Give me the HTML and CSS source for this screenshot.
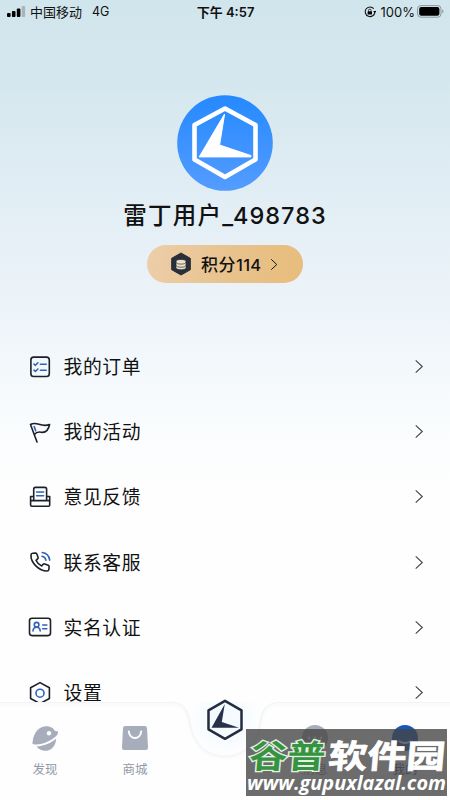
FILE: index.html
```html
<!DOCTYPE html>
<html lang="zh-CN">
<head>
<meta charset="utf-8">
<title>我的</title>
<link rel="stylesheet" href="styles.css">
</head>
<body>
<svg class="defs" width="0" height="0">
  <defs>
    <symbol id="chevron" viewBox="0 0 10 16"><path d="M1.500 1.500 8.500 8l-7 6.500" fill="none" stroke="currentColor" stroke-width="1.200"/></symbol>
    <linearGradient id="blue" x1="0" y1="0" x2="0" y2="1"><stop offset="0" stop-color="#2589ff"/><stop offset="1" stop-color="#549cff"/></linearGradient>
  </defs>
</svg>
<div class="screen">
  <header class="status">
    <div class="status-left">
      <svg width="19" height="11" viewBox="0 0 19 11"><rect x="0" y="7" width="3.6" height="4" rx="1"/><rect x="4.9" y="5" width="3.6" height="6" rx="1"/><rect x="9.8" y="2.5" width="3.6" height="8.5" rx="1"/><rect x="14.7" y="0" width="3.4" height="11" rx="1" fill="#a8b4ba"/></svg>
      <span class="carrier">中国移动</span><span class="net">4G</span>
    </div>
    <div class="time">下午 4:57</div>
    <div class="status-right">
      <svg width="12" height="12" viewBox="0 0 12 12"><path d="M9.7 2.7A4.8 4.8 0 1 0 10.8 6M9.7 9.3A4.8 4.8 0 0 0 10.8 5" fill="none" stroke="#111" stroke-width="1.1"/><path d="m9.2 5 3 0-1.5 2z"/><rect x="3.6" y="5.2" width="4.4" height="3.2" rx=".5"/><path d="M4.5 5.5V4.400a1.300 1.300 0 0 1 2.600 0v1.100" fill="none" stroke="#111" stroke-width=".8"/></svg>
      <span class="percent">100%</span>
      <svg width="27" height="13" viewBox="0 0 27 13"><rect x=".6" y=".6" width="23.400" height="11.600" rx="3.200" fill="none" stroke="#8b979e"/><rect x="2.200" y="2.100" width="20.200" height="8.600" rx="2"/><path d="M25.200 4.600v3.600q1.300-.500 1.300-1.800t-1.300-1.800" fill="#8b979e"/></svg>
    </div>
  </header>

  <section class="profile">
    <svg class="avatar" width="96" height="96" viewBox="0 0 96 96"><circle cx="48" cy="48" r="47.800" fill="url(#blue)"/><path d="M48 13.500 78.500 30v34.500L48 82 17.500 64.500V30Z" fill="none" stroke="#fff" stroke-width="4.600" stroke-linejoin="round"/><path d="M47.600 19 42.600 50 74 60.600v1.300H22.200z" fill="#fff" stroke="#fff" stroke-linejoin="round"/></svg>
    <h1 class="name">雷丁用户<span class="digits">_498783</span></h1>
    <div class="points">
      <svg width="24" height="25" viewBox="0 0 24 25"><path d="m12.800 2 9 5v11l-9 5-9-5V7z" fill="#a88d62" opacity=".6"/><path d="m12 1 9.300 5.300v11.400L12 23l-9.300-5.300V6.300z" fill="#292f38" stroke="#292f38" stroke-linejoin="round"/><g fill="#eee0c8" stroke="#292f38" stroke-width=".7"><path d="M7 13v2.500c0 3 10 3 10 0V13z"/><path d="M7 10.500v2.500c0 3 10 3 10 0v-2.500z"/><ellipse cx="12" cy="9.800" rx="5" ry="2.300"/></g></svg>
      <span class="points-text">积分<span class="points-num">114</span></span>
      <svg class="points-arrow" width="8" height="13"><use href="#chevron"/></svg>
    </div>
  </section>

  <nav class="menu">
    <div class="item"><svg class="icon" viewBox="0 0 24 24"><rect x="2.900" y="2.100" width="18.400" height="19.400" rx="2.800"/><g class="accent"><path d="m6 9 1.400 1.300L9.900 7.800M12.400 9.200h5.800M6 15.200l1.400 1.300 2.500-2.500M12.400 15.300h5.800"/></g></svg><span class="label">我的订单</span><svg class="chevron"><use href="#chevron"/></svg></div>
    <div class="item"><svg class="icon" viewBox="0 0 24 24"><path d="M2.500 4.500 9 22M2.500 4.500C9 .500 12.500 8 21.600 4.500 20.500 10 18 13 13 12.200c-3-.500-5 .200-6.800 2.500"/><path class="accent" d="m6.200 6.500 1.500 4.300"/></svg><span class="label">我的活动</span><svg class="chevron"><use href="#chevron"/></svg></div>
    <div class="item"><svg class="icon" viewBox="0 0 24 24"><path d="M5.700 11.500H2.600V20q0 1.200 1.200 1.200h16.700q1.200 0 1.200-1.200v-8.500h-3.100M2.600 15.600h19.100M5.700 15.300V4.200q0-1.800 1.800-1.800h9.300q1.800 0 1.800 1.800v11.100"/><path class="accent" d="M8.600 7h7M8.600 10.800h7"/></svg><span class="label">意见反馈</span><svg class="chevron"><use href="#chevron"/></svg></div>
    <div class="item"><svg class="icon" viewBox="0 0 24 24"><path d="M4.800 3.200 7.600 3q1 0 1.300 1l1.200 3.400q.300.900-.500 1.500L8 10.300q1.700 4 5.700 5.700l1.500-1.700q.600-.700 1.500-.400l3.500 1.300q.900.400.900 1.300l-.200 3q-.200 1.500-1.800 1.500C11 21 2.500 12.500 3 5q0-1.600 1.800-1.800Z"/><path class="accent" d="M14 6.200q3.200.500 3.900 4M14.200 2.500q6.500.700 7.500 7.600"/></svg><span class="label">联系客服</span><svg class="chevron"><use href="#chevron"/></svg></div>
    <div class="item"><svg class="icon" viewBox="0 0 24 24"><rect x="1.500" y="3.200" width="21" height="17.400" rx="2.500"/><g class="accent"><circle cx="8.600" cy="9.700" r="2.300"/><path d="M5 16q.200-3.800 3.600-3.800T12.200 16M14.700 10h4.100M14.700 13.700h4.100"/></g></svg><span class="label">实名认证</span><svg class="chevron"><use href="#chevron"/></svg></div>
    <div class="item"><svg class="icon" viewBox="0 0 24 24"><path d="m12 1.600 9.400 5.200v10.700L12 22.600l-9.400-5.100V6.800Z"/><circle class="accent" cx="12" cy="12.200" r="4"/></svg><span class="label">设置</span><svg class="chevron"><use href="#chevron"/></svg></div>
  </nav>

  <footer class="tabs">
    <svg class="tabs-bg" width="450" height="98" viewBox="0 0 450 98">
      <defs><radialGradient id="well"><stop offset=".35" stop-color="#f5fafe"/><stop offset="1" stop-color="#fdfeff"/></radialGradient></defs>
      <path d="M0 0h450v98H0z" fill="#fefefe"/>
      <circle cx="225" cy="18" r="37" fill="url(#well)"/>
      <path d="M0 2h170c12 0 17 6 19 16 3 24 16 37 36 37s33-13 36-37c2-10 7-16 19-16h170" fill="none" stroke="#fafbfb" stroke-width="4"/>
      <path d="M0 .500h170c12 0 17 6 19 16 3 24 16 38 36 38s33-14 36-38c2-10 7-16 19-16h170" fill="none" stroke="#f1f3f4"/>
    </svg>
    <div class="tab"><svg width="28" height="28" viewBox="0 0 28 28"><path d="M1.500 18.500C3 6 10 1.200 18 2.600c3 .700 4.500 2 6.200 4.600 2.600-.400 3.500.600 2.300 3.300C23 16 9 22 2.600 20.300q-1.600-.300-1.100-1.800Z"/><path d="M5.500 22.500C14 22 21 18.500 25.200 14.500 24.500 28 11.500 30 5.500 22.500Z"/><circle cx="18" cy="9.200" r="2.200" fill="#fff"/></svg><span>发现</span></div>
    <div class="tab"><svg width="28" height="28" viewBox="0 0 28 28"><path d="M4.200 2h19.600q2 0 2.200 2l1 19.500q.100 2.500-2.300 2.500H3.300Q.900 26 1 23.500L2 4q.200-2 2.200-2Z"/><path d="M7.800 7.500c1 8.500 11.400 8.500 12.400 0" fill="none" stroke="#fff" stroke-width="2" stroke-linecap="round"/></svg><span>商城</span></div>
    <div class="tab home"><svg width="38" height="44" viewBox="0 0 38 44"><path d="M19 2.800 35.500 12.300v19L19 40.800 2.500 31.300v-19Z" fill="none" stroke="#222d42" stroke-width="2.500" stroke-linejoin="round"/><path d="M18.800 6 15.800 24 33 29.700H5.500z" fill="#26324a"/></svg></div>
    <div class="tab"><svg width="28" height="28" viewBox="0 0 28 28"><circle cx="14" cy="14" r="13"/><g fill="#fff"><circle cx="8" cy="14" r="1.500"/><circle cx="14" cy="14" r="1.500"/><circle cx="20" cy="14" r="1.500"/></g></svg><span>消息</span></div>
    <div class="tab active"><svg width="28" height="28" viewBox="0 0 28 28"><circle cx="14" cy="14" r="13"/><path d="M8 17q6 4 12 0" fill="none" stroke="#fff" stroke-width="1.800"/></svg><span>我的</span></div>
  </footer>

  <div class="watermark">
    <svg width="201" height="67" viewBox="0 0 201 67">
      <g class="brand" transform="skewX(-5)">
        <text class="brand-green" x="6" y="39" textLength="76" lengthAdjust="spacingAndGlyphs">谷普</text>
        <text class="brand-white" x="85" y="39" textLength="117" lengthAdjust="spacingAndGlyphs">软件园</text>
      </g>
      <text class="url" x="1" y="61" textLength="199" lengthAdjust="spacingAndGlyphs">www.gupuxlazal.com</text>
    </svg>
  </div>
</div>
</body>
</html>
```
FILE: styles.css
```css
* { box-sizing: border-box; }
body { margin: 0; }
.defs { position: absolute; }
svg { display: block; flex: none; }

.screen {
  position: relative;
  width: 450px;
  height: 800px;
  overflow: hidden;
  display: flex;
  flex-direction: column;
  color: #111;
  font-family: Inter, "Noto Sans CJK SC", sans-serif;
  background: linear-gradient(180deg, #d1e5ed 0, #d5e7ee 80px, #e3eef5 210px, #edf4f9 310px, #f8fbfd 410px, #fefefe 490px);
}

.status {
  height: 23px;
  display: grid;
  grid-template-columns: 1fr auto 1fr;
  align-items: center;
  padding: 0 6px 0 7px;
  font-size: 13px;
  line-height: 20px;
  white-space: nowrap;
}
.status-left, .status-right { display: flex; align-items: center; }
.carrier { margin-left: 4px; }
.net { margin-left: 10px; font-size: 12.5px; }
.time { font-size: 13px; font-weight: 600; }
.status-right { justify-content: flex-end; }
.percent { margin: 0 2px 0 5px; }

.profile {
  height: 311px;
  display: flex;
  flex-direction: column;
  align-items: center;
  padding-top: 72px;
}
.name {
  margin: 6px 0 0;
  height: 37px;
  line-height: 37px;
  font-size: 23.5px;
  font-weight: 500;
  letter-spacing: 1.3px;
  white-space: nowrap;
}
.digits { font-size: 23.5px; letter-spacing: 1.05px; }
.points {
  width: 156px;
  height: 38px;
  margin-top: 11px;
  padding-left: 22px;
  border-radius: 19px;
  display: flex;
  align-items: center;
  background: linear-gradient(100deg, #edceab, #e8c28c 55%, #e7bd7b);
}
.points-text { margin: -2px 0 0 8px; font-size: 17px; font-weight: 500; letter-spacing: .5px; }
.points-num { font-size: 16.5px; letter-spacing: .3px; }
.points-arrow { margin-left: 9px; }

.menu { height: 368px; overflow: hidden; }
.item {
  height: 65.2px;
  padding: 0 26px 0 28px;
  display: flex;
  align-items: center;
}
.icon {
  width: 24px;
  height: 24px;
  fill: none;
  stroke: #1b2029;
  stroke-width: 1.6;
  stroke-linecap: round;
  stroke-linejoin: round;
}
.accent { stroke: #2f62b8; }
.label { flex: 1; margin-left: 11.5px; padding-top: 3px; font-size: 18.8px; letter-spacing: .6px; line-height: 28px; }
.chevron { width: 10px; height: 15px; color: #444; }

.tabs {
  position: relative;
  height: 98px;
  display: grid;
  grid-template-columns: repeat(5, 1fr);
}
.tabs-bg { position: absolute; inset: 0; }
.tab {
  position: relative;
  padding-top: 22px;
  display: flex;
  flex-direction: column;
  align-items: center;
  gap: 8px;
  color: #9299a7;
  fill: #a7adba;
  font-size: 12.5px;
  line-height: 19px;
}
.home { padding-top: 0; margin-top: -4px; }
.active { color: #3c5fa0; fill: #1858bd; }

.watermark {
  position: absolute;
  left: 246px;
  top: 729px;
  width: 201px;
  height: 67px;
  background: rgba(68, 68, 68, .79);
}
.brand { font-family: "Noto Sans CJK SC", sans-serif; font-weight: 700; font-size: 32.5px; }
.brand-green { fill: #35943f; stroke: #e5efe4; stroke-width: 2.6px; paint-order: stroke; }
.brand-white { fill: #fff; stroke: #fff; stroke-width: .7px; }
.url { font-family: "Open Sans", "Noto Sans", sans-serif; font-style: italic; font-weight: 700; font-size: 19px; fill: #fff; }
```
